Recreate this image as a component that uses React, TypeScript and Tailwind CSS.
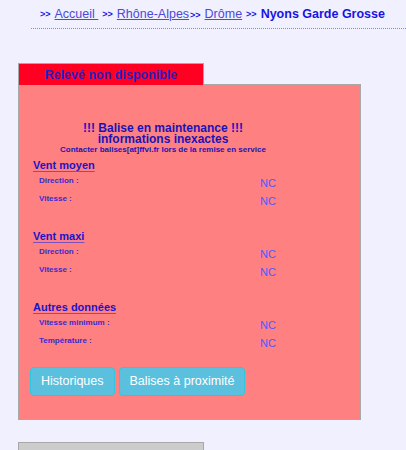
import React from "react";

const Row = ({ label, value }: { label: string; value: string }) => (
  <div className="flex h-[18px] items-start">
    <div className="w-[227px] pl-[6px] pt-[1px] text-[8px] font-bold text-[#3a2bd0]">{label}</div>
    <div className="pt-[1px] text-[11px] text-[#4a5cff]">{value}</div>
  </div>
);

const Section = ({ title, children }: { title: string; children: React.ReactNode }) => (
  <div className="flex flex-col">
    <div className="h-[17px] text-[11px] font-bold text-[#1a14c8] underline underline-offset-2 decoration-[#7a50c0]">{title}</div>
    {children}
  </div>
);

const Sep = () => <span className="font-bold text-[#1a14e0] text-[9px]">&gt;&gt;</span>;

export default function App() {
  return (
    <div className="min-h-[450px] w-[406px] bg-[#f0f0ff] font-['Liberation_Sans',Arial,sans-serif]">
      <div className="flex items-center h-[28px] pl-[40px] pt-[1px] text-[12.5px] gap-[4px] whitespace-nowrap">
        <Sep />
        <span className="underline text-[#4d48d8]">Accueil&nbsp;</span>
        <Sep />
        <span className="underline text-[#4d48d8]">Rhône-Alpes</span>
        <span className="-ml-[3px]"><Sep /></span>
        <span className="underline text-[#4d48d8]">Drôme</span>
        <Sep />
        <span className="font-bold text-[#1a14e0]">Nyons Garde Grosse</span>
      </div>
      <div className="ml-[31px] border-t border-dotted border-[#8a8ad8]" />
      <div className="ml-[18px] mt-[34px] w-[343px]">
        <div className="relative z-10 flex h-[23px] w-[186px] items-center justify-center border border-[#a8a8a8] bg-[#ff0022] pt-[1px] text-[12.5px] font-bold text-[#2a1ec0]">
          Relevé non disponible
        </div>
        <div className="-mt-[2px] h-[336px] border border-[#a8a8a8] bg-[#ff8080]">
          <div className="w-[288px] pt-[38px] flex flex-col items-center text-[#1a14b8] font-bold">
            <div className="text-[12px] leading-[11px]">!!! Balise en maintenance !!!</div>
            <div className="text-[12px] leading-[11px]">informations inexactes</div>
            <div className="text-[8px] leading-[10px]">Contacter balises[at]ffvi.fr lors de la remise en service</div>
          </div>
          <div className="pl-[14px] mt-[2px] flex flex-col gap-[18px]">
            <Section title="Vent moyen">
              <Row label="Direction :" value="NC" />
              <Row label="Vitesse :" value="NC" />
            </Section>
            <Section title="Vent maxi">
              <Row label="Direction :" value="NC" />
              <Row label="Vitesse :" value="NC" />
            </Section>
            <Section title="Autres données">
              <Row label="Vitesse minimum :" value="NC" />
              <Row label="Température :" value="NC" />
            </Section>
          </div>
          <div className="mt-[15px] flex gap-[4px] pl-[11px]">
            <button className="h-[29px] rounded-[4px] border border-[#2ec6e0] bg-[#5bc0de] px-[10px] text-[12.5px] text-white">Historiques</button>
            <button className="h-[29px] rounded-[4px] border border-[#2ec6e0] bg-[#5bc0de] px-[10px] text-[12.5px] text-white">Balises à proximité</button>
          </div>
        </div>
        <div className="mt-[22px] flex h-[23px] w-[186px] items-start pt-[4px] justify-center border border-[#a8a8a8] bg-[#cccccc] text-[12.5px] font-bold text-[#999] overflow-hidden">
          Informations balise
        </div>
      </div>
    </div>
  );
}
